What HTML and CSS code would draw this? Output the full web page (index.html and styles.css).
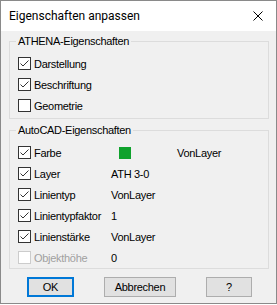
FILE: index.html
```html
<!DOCTYPE html>
<html lang="de">
<head>
    <meta charset="UTF-8">
    <title>Eigenschaften anpassen</title>
    <link rel="stylesheet" href="styles.css">
</head>
<body>
    <div class="window">
        <div class="titlebar">
            <span class="title">Eigenschaften anpassen</span>
            <svg class="close" width="10" height="10" viewBox="0 0 10 10">
                <path d="M0.5 0.5 L9.5 9.5 M9.5 0.5 L0.5 9.5" stroke="#000" stroke-width="1" fill="none"/>
            </svg>
        </div>

        <div class="content">
            <fieldset class="group">
                <legend>ATHENA-Eigenschaften</legend>
                <div class="row"><span class="box checked"></span><span class="label">Darstellung</span></div>
                <div class="row"><span class="box checked"></span><span class="label">Beschriftung</span></div>
                <div class="row"><span class="box"></span><span class="label">Geometrie</span></div>
            </fieldset>

            <fieldset class="group props">
                <legend>AutoCAD-Eigenschaften</legend>
                <div class="row">
                    <div class="opt"><span class="box checked"></span><span class="label">Farbe</span></div>
                    <div class="val"><span class="swatch"></span><span class="after-swatch">VonLayer</span></div>
                </div>
                <div class="row">
                    <div class="opt"><span class="box checked"></span><span class="label">Layer</span></div>
                    <div class="val">ATH 3-0</div>
                </div>
                <div class="row">
                    <div class="opt"><span class="box checked"></span><span class="label">Linientyp</span></div>
                    <div class="val">VonLayer</div>
                </div>
                <div class="row">
                    <div class="opt"><span class="box checked"></span><span class="label">Linientypfaktor</span></div>
                    <div class="val">1</div>
                </div>
                <div class="row">
                    <div class="opt"><span class="box checked"></span><span class="label">Linienstärke</span></div>
                    <div class="val">VonLayer</div>
                </div>
                <div class="row disabled">
                    <div class="opt"><span class="box"></span><span class="label">Objekthöhe</span></div>
                    <div class="val">0</div>
                </div>
            </fieldset>

            <div class="buttons">
                <button class="btn btn-ok">OK</button>
                <button class="btn btn-cancel">Abbrechen</button>
                <button class="btn btn-help">?</button>
            </div>
        </div>
    </div>
</body>
</html>
```

FILE: styles.css
```css
* {
    box-sizing: border-box;
}
body {
    margin: 0;
    background-color: #fff;
    font-family: "Liberation Sans", Arial, sans-serif;
    font-size: 11px;
    letter-spacing: -0.3px;
    color: #000;
}
.window {
    width: 277px;
    height: 304px;
    border: 1px solid #8a8a8a;
    background-color: #f0f0f0;
    display: flex;
    flex-direction: column;
}
.titlebar {
    height: 30px;
    background-color: #fff;
    display: flex;
    align-items: center;
    justify-content: space-between;
    padding: 0 13px 0 8px;
}
.title {
    font-family: Roboto, "Liberation Sans", sans-serif;
    font-size: 12px;
    letter-spacing: 0;
}
.close {
    display: block;
}
.content {
    padding: 0 7px 0 8px;
}
.group {
    margin: 3px 0 0 0;
    padding: 5px 0 2px 8px;
    border: 1px solid #dcdcdc;
    min-width: 0;
}
.group legend {
    padding: 0 2px;
    margin-left: -2px;
    line-height: 14px;
}
.props {
    margin-top: 4px;
    padding-bottom: 0;
}
.row {
    height: 21px;
    display: flex;
    align-items: center;
}
.opt {
    width: 93px;
    display: flex;
    align-items: center;
}
.box {
    width: 13px;
    height: 13px;
    border: 1px solid #333;
    background-color: #fff;
    flex-shrink: 0;
    margin-right: 3px;
}
.box.checked {
    background: #fff url("data:image/svg+xml,%3Csvg xmlns='http://www.w3.org/2000/svg' width='11' height='11'%3E%3Cpolyline points='1.5,5.5 4,8 9.5,2.5' fill='none' stroke='%23333' stroke-width='1'/%3E%3C/svg%3E") no-repeat center;
}
.disabled .box {
    border-color: #cccccc;
}
.disabled .label {
    color: #a0a0a0;
}
.val {
    display: flex;
    align-items: center;
}
.swatch {
    width: 12px;
    height: 12px;
    background-color: #0fa22c;
    margin-left: 8px;
}
.after-swatch {
    margin-left: 46px;
}
.buttons {
    display: flex;
    gap: 30px;
    margin-top: 8px;
    padding-left: 18px;
}
.btn {
    height: 20px;
    padding: 0;
    font-family: inherit;
    font-size: 11px;
    letter-spacing: -0.3px;
    color: #000;
    background-color: #e1e1e1;
    border: 1px solid #adadad;
}
.btn-ok {
    width: 47px;
    border: 2px solid #0078d7;
}
.btn-cancel {
    width: 72px;
}
.btn-help {
    width: 46px;
}
```
